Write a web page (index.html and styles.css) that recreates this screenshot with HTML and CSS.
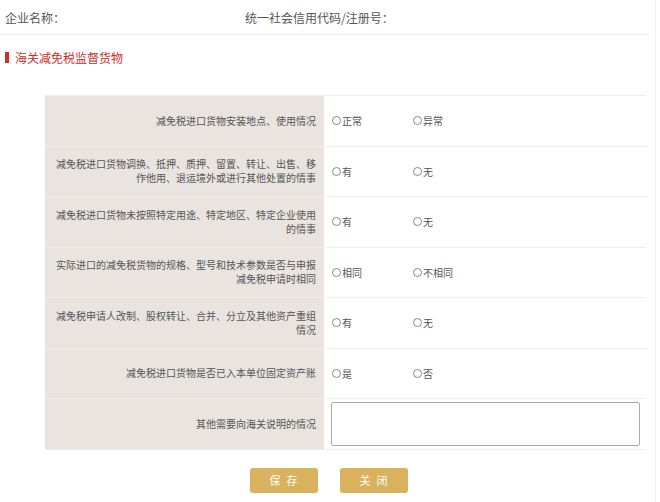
FILE: index.html
```html
<!DOCTYPE html>
<html lang="zh-CN">
<head>
<meta charset="utf-8">
<title>海关减免税监督货物</title>
<link rel="stylesheet" href="styles.css">
</head>
<body>
<div class="page">
  <div class="info">
    <span class="info-item info-name">企业名称：</span>
    <span class="info-item">统一社会信用代码/注册号：</span>
  </div>
  <div class="section-title"><span class="bar"></span>海关减免税监督货物</div>
  <table class="form-table">
    <tr>
      <td class="label">减免税进口货物安装地点、使用情况</td>
      <td class="value"><label class="opt"><span class="radio"></span>正常</label><label class="opt"><span class="radio"></span>异常</label></td>
    </tr>
    <tr>
      <td class="label">减免税进口货物调换、抵押、质押、留置、转让、出售、移作他用、退运境外或进行其他处置的情事</td>
      <td class="value"><label class="opt"><span class="radio"></span>有</label><label class="opt"><span class="radio"></span>无</label></td>
    </tr>
    <tr>
      <td class="label">减免税进口货物未按照特定用途、特定地区、特定企业使用的情事</td>
      <td class="value"><label class="opt"><span class="radio"></span>有</label><label class="opt"><span class="radio"></span>无</label></td>
    </tr>
    <tr>
      <td class="label">实际进口的减免税货物的规格、型号和技术参数是否与申报减免税申请时相同</td>
      <td class="value"><label class="opt"><span class="radio"></span>相同</label><label class="opt"><span class="radio"></span>不相同</label></td>
    </tr>
    <tr>
      <td class="label">减免税申请人改制、股权转让、合并、分立及其他资产重组情况</td>
      <td class="value"><label class="opt"><span class="radio"></span>有</label><label class="opt"><span class="radio"></span>无</label></td>
    </tr>
    <tr>
      <td class="label">减免税进口货物是否已入本单位固定资产账</td>
      <td class="value"><label class="opt"><span class="radio"></span>是</label><label class="opt"><span class="radio"></span>否</label></td>
    </tr>
    <tr>
      <td class="label">其他需要向海关说明的情况</td>
      <td class="value"><textarea class="note"></textarea></td>
    </tr>
  </table>
  <div class="actions">
    <button class="btn">保存</button>
    <button class="btn">关闭</button>
  </div>
</div>
</body>
</html>
```
FILE: styles.css
```css
html, body {
  margin: 0;
  padding: 0;
  background: #fff;
}
body {
  font-family: "Noto Sans CJK SC", "Noto Sans", sans-serif;
  color: #555;
}
.page {
  width: 656px;
  height: 502px;
  border-right: 1px solid #f3f3f3;
  box-sizing: border-box;
}
.info {
  display: flex;
  height: 35px;
  align-items: center;
  padding-left: 5px;
  width: 650px;
  border-bottom: 1px solid #ececec;
  font-size: 12px;
  color: #555;
  box-sizing: border-box;
}
.info-name {
  width: 240px;
}
.section-title {
  display: flex;
  align-items: center;
  margin: 12px 0 0 5px;
  height: 20px;
  font-size: 12px;
  color: #c9302c;
}
.bar {
  display: inline-block;
  width: 4px;
  height: 11px;
  background: #c9302c;
  margin-right: 6px;
}
.form-table {
  margin: 28px 0 0 45px;
  width: 601px;
  border-collapse: collapse;
  font-size: 10px;
}
.form-table td {
  height: 49.5px;
  padding: 0;
  border-top: 1px solid #f1eeea;
  border-bottom: 1px solid #f1eeea;
}
.label {
  width: 279px;
  box-sizing: border-box;
  padding: 0 8px 0 10px !important;
  background: #e9e4df;
  text-align: right;
  line-height: 14px;
  color: #555;
}
.value {
  padding-left: 8px !important;
  background: #fff;
}
.opt {
  display: inline-flex;
  align-items: center;
  width: 81px;
  color: #555;
  font-size: 10px;
}
.radio {
  display: inline-block;
  width: 9px;
  height: 9px;
  border: 1px solid #888;
  border-radius: 50%;
  margin-right: 1px;
  box-sizing: border-box;
}
.note {
  display: block;
  width: 309px;
  height: 44px;
  margin: 0 0 0 -1px;
  box-sizing: border-box;
  border: 1px solid #a9a9a9;
  border-radius: 2px;
  resize: none;
}
.actions {
  display: flex;
  justify-content: center;
  gap: 22px;
  margin-top: 18px;
  padding-left: 2px;
}
.btn {
  width: 68px;
  height: 25px;
  border: none;
  border-radius: 3px;
  background: #d8b25c;
  color: #fff;
  font-family: "Noto Sans CJK SC", sans-serif;
  font-size: 11px;
  letter-spacing: 6px;
  text-indent: 6px;
  padding: 0;
}
```
